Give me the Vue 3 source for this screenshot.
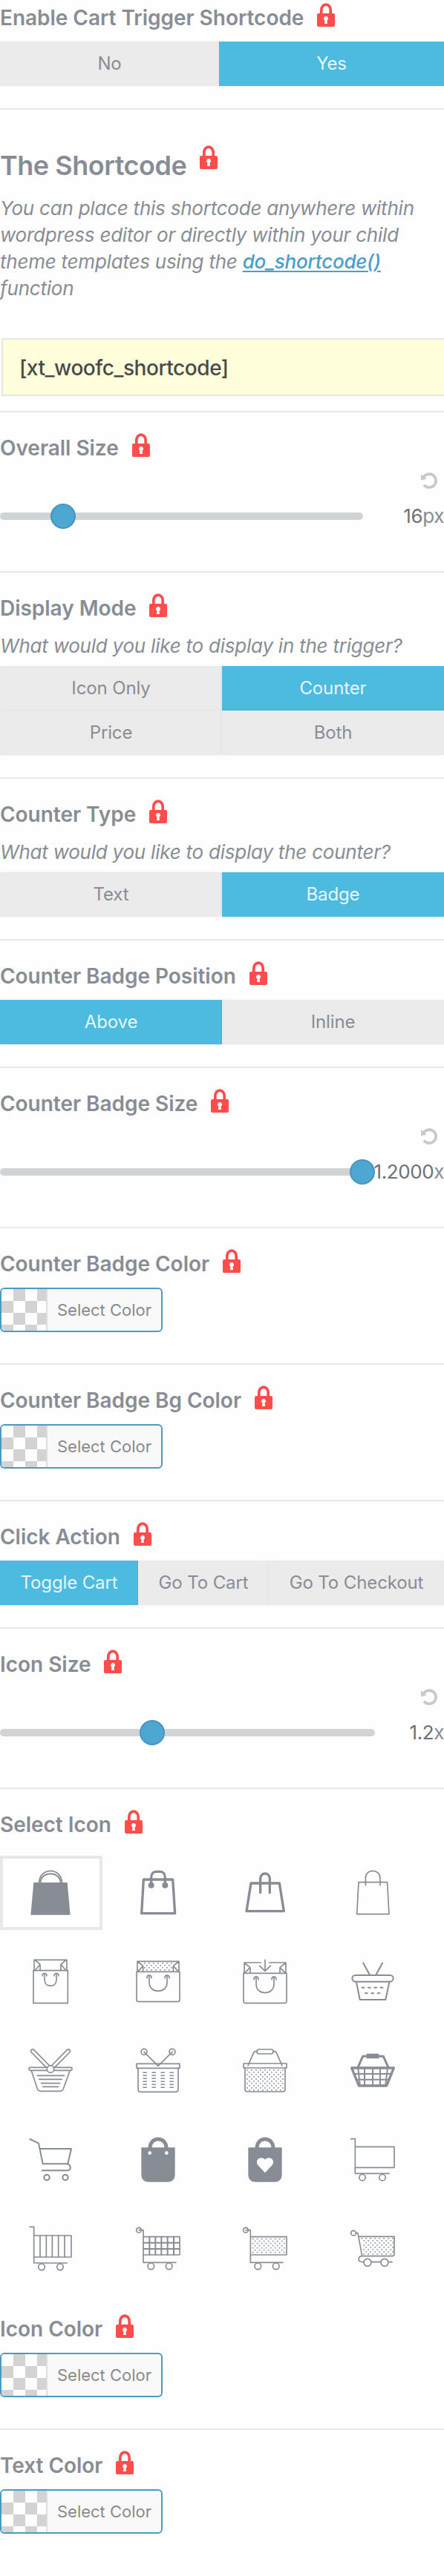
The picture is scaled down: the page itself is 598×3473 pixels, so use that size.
<script setup>
const circle = (x, y, r) => `M${x - r} ${y}a${r} ${r} 0 1 0 ${2 * r} 0a${r} ${r} 0 1 0 ${-2 * r} 0Z`
const line = (d, w = 5) => ({ d, w, fill: 'none', stroke: '#888d95' })
const solid = (d) => ({ d, w: 0, fill: '#888d95', stroke: 'none' })
const blank = (d) => ({ d, w: 0, fill: '#fff', stroke: 'none' })
const hollow = (d, w = 5) => ({ d, w, fill: '#fff', stroke: '#888d95' })
const gap = (d, w) => ({ d, w, fill: 'none', stroke: '#fff' })

// Staggered dots filling a rectangular area
function dots(x0, y0, cols, rows, skip = () => false) {
  let d = ''
  for (let r = 0; r < rows; r++) {
    for (let c = 0; c < cols; c++) {
      if ((r + c) % 2) continue
      const x = x0 + c * 9
      const y = y0 + r * 9
      if (!skip(x, y)) d += `M${x} ${y}h5.5v5.5h-5.5Z`
    }
  }
  return { ...solid(d), o: 0.85 }
}

function dashes(xs, ys, len) {
  return ys.map((y) => xs.map((x) => `M${x} ${y}h${len}`).join('')).join('')
}

const icons = [
  { box: '114 93', shapes: [
    solid('M136 144H272L284 275H124Z'),
    line('M158 146V140C161 112 183 97 204 97S247 112 250 140V146'),
    line('M163 146C163 122 183 109 204 109S245 122 245 146', 6) ] },
  { box: '549 93', shapes: [
    line('M580 132H698L707 269H572Z', 10),
    line('M611 150V125C611 108 620 100 630 100H648C658 100 667 108 667 125V150', 10),
    solid(circle(611, 155, 12)), solid(circle(667, 155, 12)) ] },
  { box: '90 93', shapes: [
    line('M123 147H238L256 260H105Z', 10),
    line('M161 185V127a19 19 0 0 1 38 0V185', 10) ] },
  { box: '522 93', shapes: [
    line('M555 143H671L678 272H548Z'),
    line('M583 155V127C583 108 596 97 612 97S642 108 642 127V155') ] },
  { box: '114 453', shapes: [
    line('M135 500H274V632H135Z'),
    line('M138 500V457H270V500M143 459L162 475V498M143 498L162 475M265 459L246 475V498M265 498L246 475'),
    line('M180 515V537C180 554 191 562 204 562S228 554 228 537V515'),
    line('M171 522C171 508 189 508 189 522M219 522C219 508 237 508 237 522') ] },
  { box: '549 453', shapes: [
    line('M552 505H726V617Q726 626 717 626H561Q552 626 552 617Z'),
    line('M555 505V463H723V505M558 465L578 482V503M558 503L578 482M720 465L700 482V503M720 503L700 482'),
    dots(582, 468, 13, 4),
    line('M603 523V548C603 572 620 583 639 583S675 572 675 548V523'),
    line('M594 530C594 516 612 516 612 530M666 530C666 516 684 516 684 530') ] },
  { box: '90 453', shapes: [
    line('M93 511H267V623Q267 632 258 632H102Q93 632 93 623Z'),
    line('M96 511V468H163M197 468H264V511M99 471L120 488V509M99 509L120 488M261 471L240 488V509M261 509L240 488'),
    line('M180 457V500M158 481L180 502L202 481'),
    line('M144 529V554C144 578 161 590 180 590S216 578 216 554V529'),
    line('M135 536C135 522 153 522 153 536M207 536C207 522 225 522 225 536') ] },
  { box: '522 453', shapes: [
    line('M542 519H682a13 13 0 0 1 0 26H542a13 13 0 0 1 0-26Z', 6),
    line('M546 547L560 618H664L679 547M574 470L599 516M651 470L626 516', 6),
    line(dashes([569, 594, 619, 644], [569], 8) + dashes([582, 607, 632], [592], 8), 6) ] },
  { box: '114 93', shapes: [
    line('M132 106L198 173M276 106L210 173', 19),
    gap('M132 106L198 173M276 106L210 173', 9),
    hollow('M123 172H285a6 6 0 0 1 0 12H123a6 6 0 0 1 0-12Z'),
    line('M127 186L152 261Q155 268 162 268H245Q252 268 255 261L282 186'),
    line('M150 205H260M158 220H250M167 236H242M173 250H236'),
    hollow(circle(204, 179, 14)) ] },
  { box: '549 93', shapes: [
    line('M552 157H726V175H552Z'),
    line('M558 175V262Q558 271 567 271H711Q720 271 720 262V175'),
    line(circle(582, 109, 12)), line(circle(696, 109, 12)),
    line('M582 109L639 166L696 109'),
    line(dashes([579, 615, 651, 687], [193, 205, 217, 229, 241, 253], 13), 4.5) ] },
  { box: '90 93', shapes: [
    line('M93 156H267V174H93Z'),
    line('M99 174V261Q99 270 108 270H252Q261 270 261 261V174'),
    dots(105, 180, 17, 10),
    line('M111 165L134 112Q136 107 147 107M213 107Q224 107 226 112L249 165'),
    line('M156 99H204a9 9 0 0 1 0 18H156a9 9 0 0 1 0-18Z') ] },
  { box: '522 93', shapes: [
    line('M527 174H697L668 246H556Z', 10),
    line('M553 170L572 127H655L674 170', 9),
    solid('M589 116H635Q637 116 637 118V134Q637 136 635 136H589Q587 136 587 134V118Q587 116 589 116Z'),
    line('M579 178V242M612 178V242M642 178V242M536 198H690M545 221H680M553 176L560 240M672 176L664 240', 6) ] },
  { box: '114 453', shapes: [
    line('M121 462L156 479L173 562H274L288 501H163', 6),
    line('M274 562C290 572 287 589 270 589H170', 6),
    line(circle(189, 617, 11), 6), line(circle(264, 617, 11), 6) ] },
  { box: '549 453', shapes: [
    solid('M571 496H707V605Q707 635 677 635H601Q571 635 571 605Z'),
    line('M606 498C606 450 672 450 672 498', 15),
    blank(circle(605, 518, 7)), blank(circle(673, 518, 7)) ] },
  { box: '90 453', shapes: [
    solid('M112 496H248V605Q248 635 218 635H142Q112 635 112 605Z'),
    line('M147 498C147 450 213 450 213 498', 15),
    blank('M180 598L151 567C141 553 151 538 164 538C172 538 177 542 180 545C183 542 188 538 196 538C209 538 219 553 209 567Z') ] },
  { box: '522 453', shapes: [
    line('M524 461H541V601H679M541 493H699V577H541'),
    line(circle(570, 617, 12.5)), line(circle(651, 617, 12.5)) ] },
  { box: '114 813', shapes: [
    line('M120 817H137V963H271M137 852H288V939H137'),
    line('M162 852V939M187 852V939M211 852V939M236 852V939M261 852V939'),
    line(circle(168, 979, 13)), line(circle(243, 979, 13)) ] },
  { box: '549 813', shapes: [
    line(circle(561, 830, 10)),
    line('M561 830H579V961H711M579 857H726V930H579'),
    line('M604 857V930M628 857V930M652 857V930M677 857V930M702 857V930M579 881H726M579 906H726', 6),
    line(circle(610, 976, 13)), line(circle(683, 976, 13)) ] },
  { box: '90 813', shapes: [
    line(circle(102, 830, 10)),
    line('M102 830H121V961H252M121 857H267V930H121'),
    dots(128, 863, 15, 7),
    line(circle(151, 976, 13)), line(circle(224, 976, 13)) ] },
  { box: '522 813', shapes: [
    line(circle(534, 842, 10)),
    line('M544 842H552L569 935H690Q699 935 699 926V856H556'),
    dots(565, 861, 15, 8, (x, y) => x < 562 + (y - 861) * 0.18),
    line('M569 935C551 936 551 958 569 959H690'),
    hollow(circle(591, 961, 15)), hollow(circle(660, 961, 15)) ] }
]

const sections = [
  { title: 'Enable Cart Trigger Shortcode', type: 'buttons', cols: 'c-toggle', options: ['No', 'Yes'], active: 1 },
  { title: 'The Shortcode', type: 'shortcode' },
  { title: 'Overall Size', type: 'slider', value: '16', unit: 'px', track: 489, thumb: 68 },
  { title: 'Display Mode', desc: 'What would you like to display in the trigger?', type: 'buttons', cols: 'c-half', options: ['Icon Only', 'Counter', 'Price', 'Both'], active: 1 },
  { title: 'Counter Type', desc: 'What would you like to display the counter?', type: 'buttons', cols: 'c-half', options: ['Text', 'Badge'], active: 1 },
  { title: 'Counter Badge Position', type: 'buttons', cols: 'c-half', options: ['Above', 'Inline'], active: 0 },
  { title: 'Counter Badge Size', type: 'slider', value: '1.2000', unit: 'x', track: 489, thumb: 471 },
  { title: 'Counter Badge Color', type: 'color' },
  { title: 'Counter Badge Bg Color', type: 'color' },
  { title: 'Click Action', type: 'buttons', cols: 'c-three', options: ['Toggle Cart', 'Go To Cart', 'Go To Checkout'], active: 0 },
  { title: 'Icon Size', type: 'slider', value: '1.2', unit: 'x', track: 505, thumb: 188 },
  { title: 'Select Icon', type: 'icons' },
  { title: 'Icon Color', type: 'color' },
  { title: 'Text Color', type: 'color' }
]
</script>

<template>
  <div class="panel">
    <section v-for="s in sections" :key="s.title" class="section" :class="'is-' + s.type">
      <header class="head">
        <h3 class="title">{{ s.title }}</h3>
        <svg class="lock" viewBox="0 0 24 32">
          <path d="M5.8 16V9.5a6.2 7.4 0 0 1 12.4 0V16" fill="none" stroke="#ff4d4d" stroke-width="3.7" />
          <path fill-rule="evenodd" fill="#ff4d4d" d="M2 14H22Q24 14 24 16V30Q24 32 22 32H2Q0 32 0 30V16Q0 14 2 14ZM12 18a3 3 0 0 0-1.5 5.6L10 28h4l-.5-4.4A3 3 0 0 0 12 18Z" />
        </svg>
      </header>

      <p v-if="s.desc" class="desc">{{ s.desc }}</p>

      <div v-if="s.type === 'buttons'" class="buttons" :class="s.cols">
        <div v-for="(o, i) in s.options" :key="o" class="btn" :class="{ active: i === s.active }">{{ o }}</div>
      </div>

      <template v-else-if="s.type === 'shortcode'">
        <p class="desc long">You can place this shortcode anywhere within<br>wordpress editor or directly within your child<br>theme templates using the <a class="link">do_shortcode()</a><br>function</p>
        <div class="code">[xt_woofc_shortcode]</div>
      </template>

      <div v-else-if="s.type === 'slider'" class="slider">
        <svg class="reset" viewBox="0 0 22 22">
          <path d="M3.6 6.2A9 9 0 1 1 4 16.6" fill="none" stroke="#c8c8c8" stroke-width="3.6" />
          <path d="M0 2L0 10.5L7.5 8.8Z" fill="#c8c8c8" />
        </svg>
        <div class="range">
          <div class="track" :style="{ width: s.track + 'px' }">
            <span class="thumb" :style="{ left: s.thumb + 'px' }"></span>
          </div>
          <div class="value">{{ s.value }}<span class="unit">{{ s.unit }}</span></div>
        </div>
      </div>

      <div v-else-if="s.type === 'color'" class="color">
        <span class="swatch"></span>
        <span class="color-label">Select Color</span>
      </div>

      <div v-else class="icons">
        <div v-for="(icon, i) in icons" :key="i" class="cell" :class="{ selected: i === 0 }">
          <svg class="icon" :viewBox="icon.box + ' 180 180'">
            <path v-for="(p, k) in icon.shapes" :key="k" :d="p.d" :fill="p.fill" :stroke="p.stroke" :stroke-width="p.w" :opacity="p.o || 1" stroke-linejoin="round" stroke-linecap="round" />
          </svg>
        </div>
      </div>
    </section>
  </div>
</template>

<style>
body {
  background: #fefefe;
}
</style>

<style scoped>
.panel {
  width: 598px;
  height: 3473px;
  overflow: hidden;
  font-family: Inter, "Liberation Sans", sans-serif;
  color: #888d95;
}
.section {
  border-bottom: 2px solid #e8e8e8;
  box-sizing: border-box;
}
.section:last-child,
.is-icons {
  border-bottom: 0;
}
.head {
  display: flex;
  align-items: flex-start;
  gap: 18px;
  height: 52px;
  padding-top: 28px;
}
.section:first-child .head {
  padding-top: 4px;
}
.title {
  margin: 0;
  font-size: 28px;
  line-height: 40px;
  font-weight: 600;
  letter-spacing: -0.03px;
  white-space: nowrap;
}
.lock {
  width: 24px;
  height: 32px;
  flex: none;
}
.desc {
  margin: 0 0 9px;
  padding-top: 1px;
  font-size: 26px;
  line-height: 36px;
  font-style: italic;
  letter-spacing: -0.23px;
  white-space: nowrap;
}
.is-shortcode .head {
  padding-top: 48px;
  height: 66px;
}
.is-shortcode .title {
  font-size: 36px;
  line-height: 48px;
  padding-top: 3px;
  letter-spacing: -0.48px;
}
.desc.long {
  margin-bottom: 49px;
}
.link {
  color: #4a9fc9;
  font-weight: 500;
  text-decoration: underline;
  text-decoration-thickness: 2px;
  text-underline-offset: 3px;
}
.code {
  box-sizing: border-box;
  height: 78px;
  width: 620px;
  margin: 0 0 20px 2px;
  padding-left: 22px;
  border: 2px solid #e5e5e5;
  background: #ffffdb;
  color: #4a4a4a;
  font-size: 28px;
  font-weight: 500;
  line-height: 76px;
  letter-spacing: -0.45px;
}
.buttons {
  display: grid;
  margin-bottom: 30px;
}
.c-toggle { grid-template-columns: 295px 303px; }
.c-half { grid-template-columns: 299px 299px; }
.c-three { grid-template-columns: 186px 176px 236px; }
.btn {
  height: 60px;
  line-height: 60px;
  font-size: 24px;
  letter-spacing: -0.12px;
  text-align: center;
  white-space: nowrap;
  background: #ebebeb;
  box-shadow: 0 0 4px rgba(0, 0, 0, 0.06);
}
.btn.active {
  background: #4dbae0;
  color: #e6f6fc;
}
.slider {
  display: flex;
  flex-direction: column;
  height: 134px;
}
.reset {
  width: 22px;
  height: 22px;
  margin: 1px 9px 20px auto;
  flex: none;
}
.range {
  display: flex;
  align-items: center;
  justify-content: space-between;
  height: 34px;
}
.track {
  position: relative;
  flex: none;
  height: 10px;
  border-radius: 5px;
  background: #d1d4d7;
}
.thumb {
  position: absolute;
  top: -12px;
  box-sizing: border-box;
  width: 34px;
  height: 34px;
  border: 2px solid #4a94bf;
  border-radius: 50%;
  background: #4ca8d0;
}
.value {
  font-size: 26px;
  line-height: 36px;
  letter-spacing: -0.4px;
  color: #6d7176;
  white-space: nowrap;
}
.unit {
  color: #888d95;
}
.color {
  box-sizing: border-box;
  display: flex;
  width: 219px;
  height: 60px;
  margin-bottom: 42px;
  overflow: hidden;
  border: 2px solid #4a9ac2;
  border-radius: 6px;
  background: #f9f9f9;
}
.swatch {
  width: 60px;
  border-right: 2px solid #ddd;
  background: conic-gradient(#d3d3d3 25%, #fff 0 50%, #d3d3d3 0 75%, #fff 0) 0 0 / 32px 32px;
}
.color-label {
  flex: 1;
  text-align: center;
  font-size: 22px;
  line-height: 56px;
  color: #8a8a8a;
  white-space: nowrap;
}
.icons {
  display: grid;
  grid-template-columns: repeat(4, 138px);
  grid-auto-rows: 100px;
  gap: 20px 6.67px;
  margin: 10px 0;
}
.cell {
  box-sizing: border-box;
  padding: 15px 0 0 34px;
  border: 4px solid transparent;
}
.cell.selected {
  border-color: #e8e8e8;
  background: #fff;
}
.icon {
  display: block;
  width: 60px;
  height: 60px;
  overflow: visible;
}
</style>
